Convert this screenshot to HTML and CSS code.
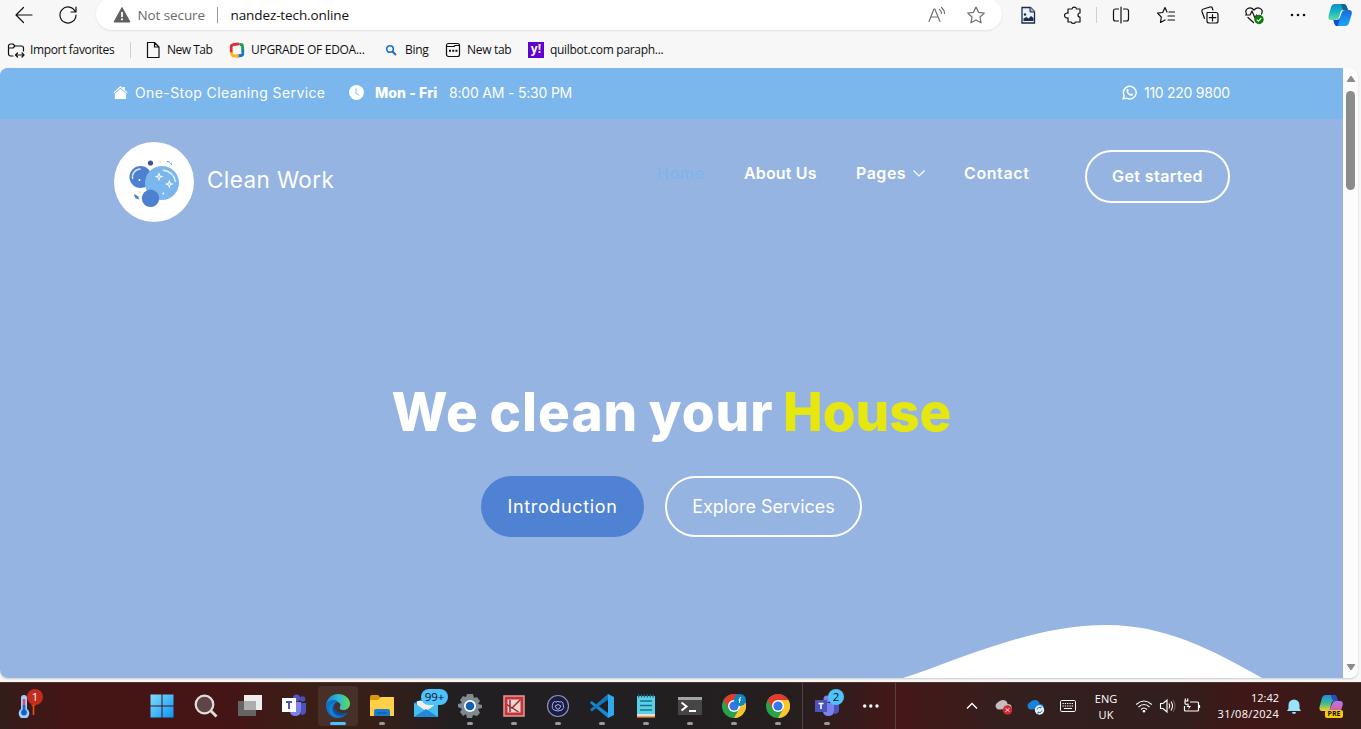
FILE: index.html
```html
<!DOCTYPE html>
<html lang="en">
<head>
<meta charset="utf-8">
<title>Clean Work</title>
<link rel="stylesheet" href="styles.css">
</head>
<body>
<div class="toolbar">
  <svg class="ic" viewBox="0 0 24 24"><path d="M20 12H4.500M11.500 4.500L4 12l7.500 7.500" class="ln"/></svg>
  <svg class="ic" viewBox="0 0 24 24"><path d="M19.200 8.500A8 8 0 1 0 20 12M20 4v5h-5" class="ln"/></svg>
  <div class="address">
    <svg class="warn" viewBox="0 0 18 18"><path d="M9 1.500L17 16H1z" fill="#606060" stroke="#606060" stroke-linejoin="round"/><path d="M9 6v5" stroke="#fff" stroke-width="1.800"/><circle cx="9" cy="13.300" r="1.100" fill="#fff"/></svg>
    <span class="insecure">Not secure</span><i class="sep"></i><span class="url">nandez-tech.online</span>
    <svg class="ic mute" viewBox="0 0 24 24"><path d="M5 18.500L10 6h.8L16 18.500M7 14h7M15.500 6.500q2 1.500 2 4M17.500 4.500q3 2.500 3 6" class="ln"/></svg>
    <svg class="ic mute star" viewBox="0 0 24 24"><path d="M12 4l2.500 5.300 5.800.7-4.300 4 1.100 5.800L12 17l-5.100 2.800L8 14 3.700 10l5.800-.7z" class="ln"/></svg>
  </div>
  <svg class="ic" viewBox="0 0 24 24"><path d="M6 4.500h8.500l4 4V20H6z" fill="#e9f2fa" stroke="#1b2b48" stroke-width="1.300"/><path d="M14 4v5h5" fill="#9eb1c7" stroke="#1b2b48"/><path d="M7.500 18v-2.500l3-1.500 2 1.500L15 13l2.500 2v3z" fill="#1b2b48"/><circle cx="9" cy="11.500" r="1.200" fill="#1b2b48"/></svg>
  <svg class="ic" viewBox="0 0 24 24"><path d="M8 6h3a2.300 2.300 0 0 1 4.500 0H19v4a2 2 0 0 0 0 4v5h-4.500a2.300 2.300 0 0 1-4.300 0H7v-4.200a2.500 2.500 0 1 1 0-4.600V6z" class="ln"/></svg>
  <i class="sep pale"></i>
  <svg class="ic" viewBox="0 0 24 24"><path d="M9.500 6H6.500a2 2 0 0 0-2 2v8a2 2 0 0 0 2 2h3M14.500 6H17.500a2 2 0 0 1 2 2v8a2 2 0 0 1-2 2h-3M12 4v16" class="ln"/></svg>
  <svg class="ic" viewBox="0 0 24 24"><path d="M13 9l-2-4.500-2.300 5-5.200.7L7.300 14l-.8 5.500L11 17M15 9h5.500M14 13h6.500M14 17h6.500" class="ln"/></svg>
  <svg class="ic" viewBox="0 0 24 24"><path d="M9 9.500h9a2 2 0 0 1 2 2V18a2 2 0 0 1-2 2h-7a2 2 0 0 1-2-2zM14.500 11.500v6.500M11.300 14.700h6.500M6.500 15.500L4 8.500Q3.500 6.500 5.500 6L12 4q2-.5 2.500 1.500l.4 1.500" class="ln"/></svg>
  <svg class="ic" viewBox="0 0 24 24"><path d="M4.500 11C2 6 8 2.500 12 7c4-4.500 10-1 7.500 4M3.500 12H8l2-4 3 7 1.500-3M6 14.500l5.500 5" class="ln"/><circle cx="17" cy="16.500" r="4.700" fill="#0f7b0f"/><path d="M14.800 16.600l1.600 1.500 2.800-3" stroke="#fff" fill="none" stroke-width="1.200"/></svg>
  <svg class="ic" viewBox="0 0 24 24"><g fill="#111"><circle cx="6" cy="12" r="1.300"/><circle cx="12" cy="12" r="1.300"/><circle cx="18" cy="12" r="1.300"/></g></svg>
  <svg class="ic" viewBox="0 0 24 24"><defs><linearGradient id="ca" x2="0" y2="1"><stop stop-color="#168bd0"/><stop offset=".5" stop-color="#16b6c4"/><stop offset="1" stop-color="#63dca1"/></linearGradient><linearGradient id="cb" x2="0" y2="1"><stop stop-color="#1c6bdc"/><stop offset="1" stop-color="#18a7f5"/></linearGradient></defs><path d="M7 1h9q2 0 2.800 2.500L20 7h-5q-2 0-2.500 2l-1.700 6q-.8 2-3 2H3q-3 0-2.500-4L3 4q.9-3 4-3z" fill="url(#ca)"/><path d="M13 1h3q2 0 2.800 2.500L20 7h-5z" fill="#116589"/><path d="M17 7h4q3.500 0 2.700 4L21 20q-.9 3-4 3H9q-2.500 0-3.500-6H9q2 0 2.700-2l2.300-6q.8-2 3-2z" fill="url(#cb)"/><path d="M5.500 17H9q2 0 2.700-2L10 23H9q-2.500 0-3.500-6z" fill="#174bd2"/></svg>
</div>
<div class="favs">
  <svg class="fi" viewBox="0 0 18 18"><path d="M6 15H3.500a2 2 0 0 1-2-2V5a2 2 0 0 1 2-2H6l2 2h6.500a2 2 0 0 1 2 2v3M1.500 7H6l2-2M9 14h8M10.500 12L8.500 14l2 2M15 12l2 2-2 2" class="ln"/></svg><span class="f1">Import favorites</span><i class="sep pale"></i>
  <svg class="fi" viewBox="0 0 18 18"><path d="M3.500 1.500h7l4.500 4.500v10.500H3.500zM10.500 1.500V6H15" class="ln"/></svg><span class="f2">New Tab</span>
  <svg class="fi" viewBox="0 0 18 18"><g fill="none" stroke-width="2.800" stroke-linecap="round"><path d="M12.500 3.500q2 0 2 2l.3 4" stroke="#13a652"/><path d="M14.800 10v2.500q0 2-2 2l-3 .5" stroke="#1575d0"/><path d="M9.500 15H6q-2 0-2.200-2.200L3.500 11" stroke="#fdb515"/><path d="M3.200 10V6q0-2 2-2.300L10 3" stroke="#e32b38"/></g></svg><span class="f3">UPGRADE OF EDOA...</span>
  <svg class="fi" viewBox="0 0 18 18"><circle cx="8" cy="8" r="3.300" fill="none" stroke="#1670c8" stroke-width="1.600"/><path d="M10.500 10.500l3.500 3.500" stroke="#1670c8" stroke-width="2"/></svg><span class="f4">Bing</span>
  <svg class="fi" viewBox="0 0 18 18"><rect x="2.500" y="2.500" width="13" height="13" rx="2" class="ln"/><path d="M3 5.500h7l1-1h4.500" class="ln"/><path d="M5 9.700h2M8.200 9.700h2M11.400 9.700h2" stroke="#111" stroke-width="2"/></svg><span class="f5">New tab</span>
  <b class="yahoo">y!</b><span class="f6">quilbot.com paraph...</span>
</div>
<div class="view">
  <div class="site">
    <div class="topbar">
      <svg class="s14" viewBox="0 0 16 16"><path d="M8 1l2.500 2.200V2h2v3L15.500 8l-.8.9L8 2.900 1.300 8.900.5 8z" fill="#fff"/><path d="M8 4l6 5.300V15H2V9.300z" fill="#fff"/></svg><span class="t1">One-Stop Cleaning Service</span>
      <svg class="s14" viewBox="0 0 16 16"><circle cx="8" cy="8" r="8" fill="#fff"/><path d="M7.500 3.500V9l3.500 2" fill="none" stroke="#7bb6ec"/></svg><strong class="t2">Mon - Fri</strong><span class="t3">8:00 AM - 5:30 PM</span>
      <svg class="s14 wa" viewBox="0 0 16 16"><path d="M1.300 14.700l1-3.500A6.800 6.800 0 1 1 5 14z" fill="none" stroke="#fff" stroke-width="1.500"/><path d="M4.700 5q.8-1.500 1.800-.5l.7 1.700-.8 1q1 2 2.800 2.500l1-1 1.700.8q.4 1.300-1.200 2-2 .5-4.500-2Q4.300 7 4.700 5z" fill="#fff"/></svg><span class="t4">110 220 9800</span>
    </div>
    <div class="nav">
      <svg class="logo" viewBox="0 0 80 80"><circle cx="40" cy="40" r="40" fill="#fff"/><circle cx="26.500" cy="35" r="11" fill="#4d80d1"/><path d="M18.700 37a8 8 0 0 1 8-10" stroke="#fff" stroke-width="1.500" stroke-opacity=".8" fill="none"/><circle cx="48" cy="41" r="17" fill="#7bb6ec"/><circle cx="36.500" cy="56.300" r="8.700" fill="#4d80d1"/><path d="M49 28q11 2 12.500 12" stroke="#fff" stroke-width="1.500" stroke-opacity=".8" fill="none"/><path d="M45 30l1.200 3.400 3.400 1.200-3.400 1.200L45 39.200l-1.200-3.400-3.400-1.200 3.400-1.200zM55.300 37.500l1.200 3.400 3.400 1.200-3.400 1.200-1.200 3.400-1.200-3.400-3.400-1.200 3.400-1.200z" fill="#fff"/><path d="M45 33.500v2.500M55.300 41v2.500" stroke="#7bb6ec"/><circle cx="36.500" cy="21" r="2.600" fill="#3d5098"/><circle cx="46" cy="20" r="1.100" fill="#f8e9b8"/><circle cx="25.500" cy="50.500" r="1.300" fill="#f8e9b8"/><circle cx="25.500" cy="38" r=".9" fill="#fff"/><circle cx="49.300" cy="51.500" r=".9" fill="#fff"/><path d="M53 19.500q3.500 0 4.500 3.500" stroke="#4d80d1" stroke-dasharray="3 1" fill="none"/><path d="M20 52q0 5 5.500 5.500-1.500-1.500-1-3z" fill="#4d80d1"/></svg>
      <span class="brand">Clean Work</span>
      <span class="n1">Home</span><span class="n2">About Us</span><span class="n3">Pages</span>
      <svg class="chev" viewBox="0 0 12 12"><path d="M.5 3.500L6 9l5.500-5.500" fill="none" stroke="#fff" stroke-width="1.200"/></svg>
      <span class="n4">Contact</span><div class="cta"><span>Get started</span></div>
    </div>
    <h1><span class="h-a">We clean your</span> <span class="h-b">House</span></h1>
    <div class="btns"><div class="btn b1"><span>Introduction</span></div><div class="btn b2"><span>Explore Services</span></div></div>
    <svg class="wave" viewBox="0 0 1343 53"><path d="M903 53C960 35 1030 0 1107 0C1165 0 1213 25 1262 53z" fill="#fff"/></svg>
  </div>
  <div class="scroll">
    <svg class="arrow" viewBox="0 0 10 8"><path d="M5 1l3.800 5.500H1.200z" fill="#8b8b8b" stroke="#8b8b8b" stroke-linejoin="round"/></svg>
    <i class="thumb"></i>
    <svg class="arrow down" viewBox="0 0 10 8"><path d="M5 7l3.800-5.500H1.200z" fill="#8b8b8b" stroke="#8b8b8b" stroke-linejoin="round"/></svg>
  </div>
</div>
<div class="taskbar">
  <div class="app weather"><svg viewBox="0 0 24 24"><path d="M4 4a3 3 0 0 1 6 0v11a5.300 5.300 0 1 1-6 0z" fill="#9fd1f7"/><path d="M7 5v13" stroke="#d94882" stroke-width="2.500"/><path d="M7 11v6" stroke="#1769d2" stroke-width="2.500"/><circle cx="7" cy="18.500" r="2.900" fill="#1160cd"/><path d="M16.500 11v10M14.500 11h4" stroke="#e3500f" stroke-width="1.700"/></svg><b class="badge red">1</b></div>
  <div class="app"><svg viewBox="0 0 24 24"><defs><linearGradient id="wn" x2="1" y2="1"><stop stop-color="#83dcfb"/><stop offset="1" stop-color="#0a95f7"/></linearGradient></defs><path d="M.5.500h11v11H.5zM12.500.500h11v11h-11zM.5 12.500h11v11H.5zM12.500 12.500h11v11h-11z" fill="url(#wn)"/></svg></div>
  <div class="app"><svg viewBox="0 0 24 24"><circle cx="10.500" cy="10.500" r="8.800" fill="#614444" stroke="#dedede" stroke-width="2.200"/><path d="M17 17l5.500 5.500" stroke="#dedede" stroke-width="2.800"/></svg></div>
  <div class="app"><svg viewBox="0 0 24 24"><path d="M6 1h18v15H6z" fill="#ededed"/><path d="M0 7h18v15H0z" fill="#656565"/><path d="M6 7h12v9H6z" fill="#b0acac"/></svg></div>
  <div class="app"><svg viewBox="0 0 24 24"><circle cx="14.500" cy="4" r="3.500" fill="#5059c9"/><circle cx="20.500" cy="5" r="2.800" fill="#4850b8"/><path d="M17 9h7v8q0 4-5 4z" fill="#4b53bc"/><path d="M8 8h11v8q0 6-6 6-4 0-5-4z" fill="#7b83eb"/><path d="M0 4h14v14H0z" fill="#fff"/><path d="M4 8h6M7 8v7" stroke="#4b53bc" stroke-width="1.900"/></svg></div>
  <div class="app active wide"><svg viewBox="0 0 24 24"><defs><linearGradient id="ed" x2="1"><stop stop-color="#1585d0"/><stop offset=".5" stop-color="#2ab8d5"/><stop offset="1" stop-color="#5dde57"/></linearGradient></defs><path d="M0 12A12 12 0 0 1 12 0c7 0 12 5 12 9.500 0 4-3 6.500-6.500 6.500-3 0-4.500-1.300-3.500-3 1.500-3-.5-5-4-5C5 8 0 11 0 12z" fill="url(#ed)"/><path d="M0 12c0-6 10-8 12-4-3 0-5 3-4 7 1.500 5 9 7 14 3C19 22 16 24 12 24A12 12 0 0 1 0 12z" fill="#126fc5"/><path d="M9 9c-6 4-3 13 5 14.500-5 1-11-3-11-8C3 11 6 9 9 9z" fill="#1284cf"/><path d="M9 10c-3 6 5 12 13 8-4 5-11 5-14 0-2-3-1-6 1-8z" fill="#114c9a"/></svg></div>
  <div class="app run"><svg viewBox="0 0 24 24"><path d="M0 3q0-2 2-2h6l3 3v5H0z" fill="#d99808"/><path d="M0 6h8l3-3h13v19H0z" fill="#ffcf45"/><path d="M4 22v-5q0-2 2-2h12q2 0 2 2v5z" fill="#187bcf"/><path d="M7 19h10" stroke="#0d569e"/></svg></div>
  <div class="app"><svg viewBox="0 0 24 24"><path d="M0 9l12-6 12 6v14H0z" fill="#1b8bdc"/><path d="M3 7h18v4l-9 7-9-7z" fill="#eee"/><path d="M0 9l12 8 12-8v14H0z" fill="#45bdf1"/><path d="M0 23l12-8 12 8z" fill="#2488d9"/></svg><b class="badge blue many">99+</b></div>
  <div class="app run"><svg viewBox="0 0 24 24"><path d="M9 0h6l1 4 3-1 3 4-2 3 4 1v3l-4 1 2 4-3 3-4-1-1 3H9l-1-4-3 2-3-4 2-3-4-2v-3l4-1-2-3 3-4 3 1z" fill="#7e8991"/><circle cx="12" cy="12" r="6" fill="#fff"/><circle cx="12" cy="12" r="4.300" fill="#0d60b4"/></svg></div>
  <div class="app run"><svg viewBox="0 0 24 24"><path d="M2 2h20v20H2z" fill="#c63438" stroke="#e19b9c" stroke-width="1.500"/><path d="M5.500 5.500h13v13h-13z" fill="#ecd5d2"/><path d="M5 10.500l5 3.500 8.500-8.500M8 6v12M10.500 14l6 4" fill="none" stroke="#a2252b" stroke-width="1.500"/></svg></div>
  <div class="app run"><svg viewBox="0 0 24 24"><circle cx="12" cy="12" r="10.500" fill="#171c49" stroke="#8d92a4" stroke-width="1.200"/><path d="M7 9a2 2 0 0 1 3-1q2-1 4 0a2 2 0 0 1 3 2q2 4-1 6-4 2-8 0-3-2-1-7z" fill="none" stroke="#abb2d3"/><path d="M9 12q3-3 6 0l-2 3h-2z" fill="none" stroke="#abb2d3"/></svg></div>
  <div class="app run"><svg viewBox="0 0 24 24"><path d="M1.500 7L18 19v5L0 9z" fill="#168bd1"/><path d="M18 0v5.500L1.800 17.500 0 15.500z" fill="#1677bd"/><path d="M18 0l6 3v18l-6 3z" fill="#30a9ee"/></svg></div>
  <div class="app run"><svg viewBox="0 0 24 24"><path d="M3 2h18v19H3z" fill="#5bcfe5"/><path d="M3 20h18v3H3z" fill="#e7e1d6"/><path d="M3 23.300h18" stroke="#b85c10" stroke-width="1.500"/><path d="M6 7h12M6 11.500h12M6 16h12" stroke="#137593" stroke-width="1.600"/><path d="M4 2h16" stroke="#176b87" stroke-width="3" stroke-dasharray="1.300 1.600"/></svg></div>
  <div class="app run"><svg viewBox="0 0 24 24"><path d="M0 3h24v18H0z" fill="#464646"/><path d="M0 3h24v3H0z" fill="#a4a4a4"/><path d="M3.500 8.500l5 4-5 4M11 17h7" fill="none" stroke="#fff" stroke-width="2"/></svg></div>
  <div class="app run"><svg viewBox="0 0 24 24"><circle cx="12" cy="12" r="12" fill="#29a34a"/><path d="M1.600 6A12 12 0 0 1 22.400 6H12l-5.200 9z" fill="#e33b2e"/><path d="M22.400 6A12 12 0 0 1 12 24l5.200-9L12 6z" fill="#fcc52c"/><circle cx="12" cy="12" r="6" fill="#fff"/><circle cx="12" cy="12" r="4.600" fill="#3478e5"/><circle cx="18" cy="6" r="6" fill="#0b87c9"/><path d="M17.500 9V4.500q0-1 1.700-1M16.500 6H19" stroke="#fff" fill="none"/></svg></div>
  <div class="app run"><svg viewBox="0 0 24 24"><circle cx="12" cy="12" r="12" fill="#29a34a"/><path d="M1.600 6A12 12 0 0 1 22.400 6H12l-5.200 9z" fill="#e33b2e"/><path d="M22.400 6A12 12 0 0 1 12 24l5.200-9L12 6z" fill="#fcc52c"/><circle cx="12" cy="12" r="6" fill="#fff"/><circle cx="12" cy="12" r="4.600" fill="#3478e5"/></svg></div>
  <i class="div"></i>
  <div class="app run"><svg viewBox="0 0 24 24"><circle cx="12" cy="5" r="3.500" fill="#7b83eb"/><path d="M17 9h7v7q0 4-5 4z" fill="#4b53bc"/><path d="M8 9h11v8q0 5-6 5-4 0-5-4z" fill="#7b83eb"/><path d="M0 6h12v12H0z" fill="#4b53bc"/><path d="M3.500 9.500h5M6 9.500V15" stroke="#fff" stroke-width="1.600"/></svg><b class="badge blue two">2</b></div>
  <div class="app"><svg viewBox="0 0 24 24"><g fill="#fff"><circle cx="5.700" cy="12" r="1.700"/><circle cx="11.800" cy="12" r="1.700"/><circle cx="18" cy="12" r="1.700"/></g></svg></div>
  <i class="div"></i>
  <div class="tray">
    <svg class="k1" viewBox="0 0 18 18"><path d="M4 11.500l5-5 5 5" fill="none" stroke="#fff" stroke-width="1.400"/></svg>
    <svg class="k2" viewBox="0 0 18 18"><path d="M3 12.500A3.800 3.800 0 0 1 2 6q5-5 9-2 1.500 1 1.500 3 5 0 4 5z" fill="#c4bfbe"/><circle cx="12.500" cy="13" r="4.700" fill="#d52832"/><path d="M10.800 11.300l3.400 3.400M14.200 11.300l-3.400 3.400" stroke="#fff"/></svg>
    <svg class="k2" viewBox="0 0 18 18"><path d="M3 12.500A3.800 3.800 0 0 1 2 6q5-5 9-2 1.500 1 1.500 3 5 0 4 5z" fill="#1683dc"/><circle cx="12.500" cy="13" r="4.700" fill="#e9f4fd"/><path d="M10 12.500a2.500 2.500 0 0 1 4-1.500V9.500M15 13.500a2.500 2.500 0 0 1-4 1.500v1.500" fill="none" stroke="#1769b4"/></svg>
    <svg class="k3" viewBox="0 0 18 18"><rect x="1.500" y="3.500" width="15" height="11" rx="1.200" fill="none" stroke="#fff"/><path d="M3.500 6.500h11M3.500 9h11" stroke="#fff" stroke-dasharray="1.300 1"/><path d="M5 11.500h8" stroke="#fff"/></svg>
    <div class="lang"><span>ENG</span><span>UK</span></div>
    <svg class="k4" viewBox="0 0 18 18"><g fill="none" stroke="#fff" stroke-width="1.100"><path d="M1.200 7.500q7.800-7 15.600 0M3.500 10q5.500-5 11 0M6 12.500q3-3 6 0"/></g><circle cx="9" cy="14.300" r="1.300" fill="#fff"/></svg>
    <svg class="k5" viewBox="0 0 18 18"><path d="M2.500 6.500H5l4-3.500v12l-4-3.500H2.500zM11 6.500q1.500 2.500 0 5M13 4.500q3 4.500 0 9" fill="none" stroke="#fff" stroke-width="1.100"/><path d="M15 3q4 6 0 12" fill="none" stroke="#7c6462"/></svg>
    <svg class="k6" viewBox="0 0 18 18"><path d="M7 5h7.500q1 0 1 1v7q0 1-1 1h-12q-1 0-1-1V9M16.500 8v3M1.500 4h4M2.300 1.500V4M4.700 1.500V4M2 4v2q0 2 3 1" fill="none" stroke="#fff" stroke-width="1.200"/><path d="M6 6l-2.500 4H6l-1 3 3-4H5.500z" fill="#fff"/></svg>
    <div class="clock"><span class="ck1">12:42</span><span class="ck2">31/08/2024</span></div>
    <svg class="k7" viewBox="0 0 18 18"><path d="M3.500 8a5.500 5.500 0 0 1 11 0v3.500l1.500 2.500H2l1.500-2.500zM7 15h4a2 2 0 0 1-4 0z" fill="#98e3fc"/></svg>
    <div class="cop"><svg viewBox="0 0 24 24"><defs><linearGradient id="c1" x2="0" y2="1"><stop stop-color="#2588f1"/><stop offset=".5" stop-color="#37bb8f"/><stop offset="1" stop-color="#f3d02f"/></linearGradient><linearGradient id="c2" x2="0" y2="1"><stop stop-color="#b078ec"/><stop offset="1" stop-color="#ed5579"/></linearGradient></defs><path d="M7 1h8q2 0 2.500 2L19 7h-4q-2 0-2.500 2l-2 8H3q-3 0-2.500-4L3 4q.9-3 4-3z" fill="url(#c1)"/><path d="M12 1h3q2 0 2.500 2L19 7h-4q-3-2-3-6z" fill="#244fbd"/><path d="M17 7h4q3.500 0 2.700 4L21 20H9l4-10q.8-3 4-3z" fill="url(#c2)"/></svg><b class="pre">PRE</b></div>
  </div>
</div>
</body>
</html>
```
FILE: styles.css
```css
* { box-sizing: border-box; }
body { margin: 0; width: 1361px; height: 729px; overflow: hidden; background: #f7f7f7; font-family: "Open Sans", "Noto Sans", sans-serif; color: #111; display: flex; flex-direction: column; }
svg { display: block; flex: none; }
span, b, strong { white-space: nowrap; }
.ln { fill: none; stroke: currentColor; stroke-width: 1.2; stroke-linejoin: round; stroke-linecap: round; }
.sep { width: 1px; height: 16px; background: #999; justify-self: center; }
.pale { background: #cfcfcf; }

.toolbar { height: 30px; display: grid; align-items: center; justify-items: center; grid-template-columns: 48px 40px 921px 38px 52px 0 43px 47px 42px 45px 43px 41px; }
.toolbar > .ic { margin-top: -1px; }
.toolbar > .sep { margin-left: -5px; }
.ic { width: 24px; height: 24px; }
.address { width: 906px; height: 32px; margin: -2px 0 0 0; background: #fff; border-radius: 16px; box-shadow: 0 1px 2px #e2e2e2; display: flex; align-items: center; padding: 1px 0 0 17px; }
.warn { width: 18px; height: 18px; margin-right: 7px; }
.insecure { width: 79px; font-size: 13.5px; letter-spacing: -.1px; color: #6b6b6b; }
.url { width: 693px; margin-left: 13px; font-size: 13.5px; letter-spacing: -.1px; }
.mute { color: #707070; }
.star { margin-left: 16px; }

.favs { height: 38px; padding: 1px 0 0 7px; display: flex; align-items: center; font-size: 12px; }
.fi { width: 18px; height: 18px; margin-right: 5px; }
.f1 { width: 100px; letter-spacing: -.35px; }
.f1 + .sep { margin-right: 13px; }
.f2 { width: 61px; letter-spacing: -.5px; }
.f3 { width: 131px; letter-spacing: -.28px; }
.f4 { width: 39px; letter-spacing: -.3px; }
.f5 { width: 61px; letter-spacing: -.3px; }
.f6 { letter-spacing: -.3px; }
.yahoo { width: 16px; height: 16px; margin-right: 6px; background: #6001d2; color: #fff; font-size: 12px; line-height: 13px; text-align: center; }

.view { width: 1358px; height: 610px; display: flex; border-radius: 8px; overflow: hidden; background: #fcfcfc; box-shadow: 0 1px 2px #ccc; flex: none; }
.site { width: 1343px; background: #96b4e2; color: #fff; font-family: Inter, sans-serif; display: flex; flex-direction: column; }
.topbar { height: 51px; background: #7bb6ec; display: flex; align-items: center; padding: 0 113px 2px; font-size: 14px; }
.s14 { width: 15px; height: 15px; margin-right: 7px; }
.t1 { width: 214px; letter-spacing: .41px; }
.t2 { width: 74px; margin-left: 4px; font-weight: 800; letter-spacing: .1px; }
.t3 { width: 123px; letter-spacing: -.2px; }
.wa { margin-left: auto; }
.t4 { width: 86px; letter-spacing: -.27px; }
.nav { height: 125px; display: flex; align-items: flex-start; padding: 23px 0 0 114px; font-size: 16px; font-weight: 600; line-height: 20px; }
.logo { width: 80px; height: 80px; }
.brand { width: 449px; margin: 28px 0 0 14px; font-size: 22.5px; font-weight: 400; letter-spacing: .4px; text-indent: -1px; }
.n1, .n2, .n3, .n4 { margin-top: 21px; }
.n1 { width: 87px; color: #7bb6ec; font-weight: 500; letter-spacing: .6px; }
.n2 { width: 112px; letter-spacing: .15px; }
.n3 { width: 57px; letter-spacing: .5px; }
.n4 { width: 121px; letter-spacing: .6px; }
.chev { width: 12px; height: 12px; margin: 25px 39px 0 0; }
.cta { width: 145px; height: 53px; margin-top: 8px; border: 2px solid #fff; border-radius: 27px; display: flex; align-items: center; justify-content: center; padding-bottom: 2px; letter-spacing: .4px; }
h1 { margin: 135px 0 0; height: 66px; line-height: 66px; font-size: 53px; font-weight: 800; text-align: center; white-space: nowrap; word-spacing: -2px; }
.h-a { letter-spacing: 1px; }
.h-b { color: #e5e70e; }
.btns { display: flex; justify-content: center; gap: 21px; margin-top: 31px; }
.btn { height: 61px; border-radius: 31px; font-size: 18px; display: flex; align-items: center; justify-content: center; }
.b1 { width: 163px; background: #4f82d2; letter-spacing: .65px; }
.b2 { width: 197px; border: 2px solid #fff; }
.wave { width: 1343px; height: 53px; margin-top: auto; }
.scroll { width: 15px; display: flex; flex-direction: column; align-items: center; padding: 7px 0; }
.arrow { width: 10px; height: 8px; }
.thumb { width: 9px; height: 99px; border-radius: 5px; background: #8b8b8b; margin-top: 8px; }
.down { margin-top: auto; }

.taskbar { height: 47px; margin-top: 4px; flex: none; display: flex; align-items: center; border-top: 1px solid #4b3735; color: #fff; background: linear-gradient(90deg, #331d1b 0, #451415 70px, #451415 220px, #3b1e16 300px, #371f18 370px, #211f21 460px, #211f21 650px, #271e1e 800px, #461718 900px, #33201e 1010px, #321e1c 1180px, #401717 1250px, #341c18 1361px); }
.app { width: 44px; height: 40px; display: flex; align-items: center; justify-content: center; position: relative; flex: none; }
.app svg { width: 24px; height: 24px; }
.weather { margin: 0 89px 0 7px; }
.active { width: 40px; margin: 0 2px; background: #ffffff14; border-radius: 4px; }
.run::after, .active::after { content: ""; position: absolute; bottom: 1px; width: 6px; height: 3px; border-radius: 2px; background: #999; }
.active::after { width: 16px; background: #4cc2ff; }
.badge { position: absolute; top: 3px; height: 16px; line-height: 15px; border-radius: 8px; text-align: center; font-size: 11.5px; font-weight: 400; }
.red { left: 20px; width: 16px; background: #c42b1c; }
.blue { background: #4cc2ff; color: #111; }
.many { left: 17px; width: 27px; }
.two { left: 23px; width: 16px; }
.div { width: 1px; height: 46px; margin: 0 2px; background: #53403f; flex: none; }
.tray { display: flex; align-items: center; margin-left: 65px; font-size: 11px; line-height: 16px; }
.tray > svg { width: 18px; height: 18px; }
.k1 { margin-right: 14px; }
.k2 { margin-right: 14px; }
.lang { width: 58px; text-align: center; display: flex; flex-direction: column; padding-top: 1px; }
.k4 { margin-right: 5px; }
.k5 { margin-right: 7px; }
.k6 { margin-right: -1px; }
.clock { width: 79px; display: flex; flex-direction: column; align-items: flex-end; }
.ck2 { letter-spacing: .3px; }
.k7 { margin: 0 16px 0 6px; }
.cop { width: 24px; height: 24px; position: relative; }
.pre { position: absolute; left: 6px; bottom: 0; width: 18px; height: 8px; border-radius: 2px; background: #f8c811; color: #111; font-size: 7px; line-height: 8px; text-align: center; }
```
